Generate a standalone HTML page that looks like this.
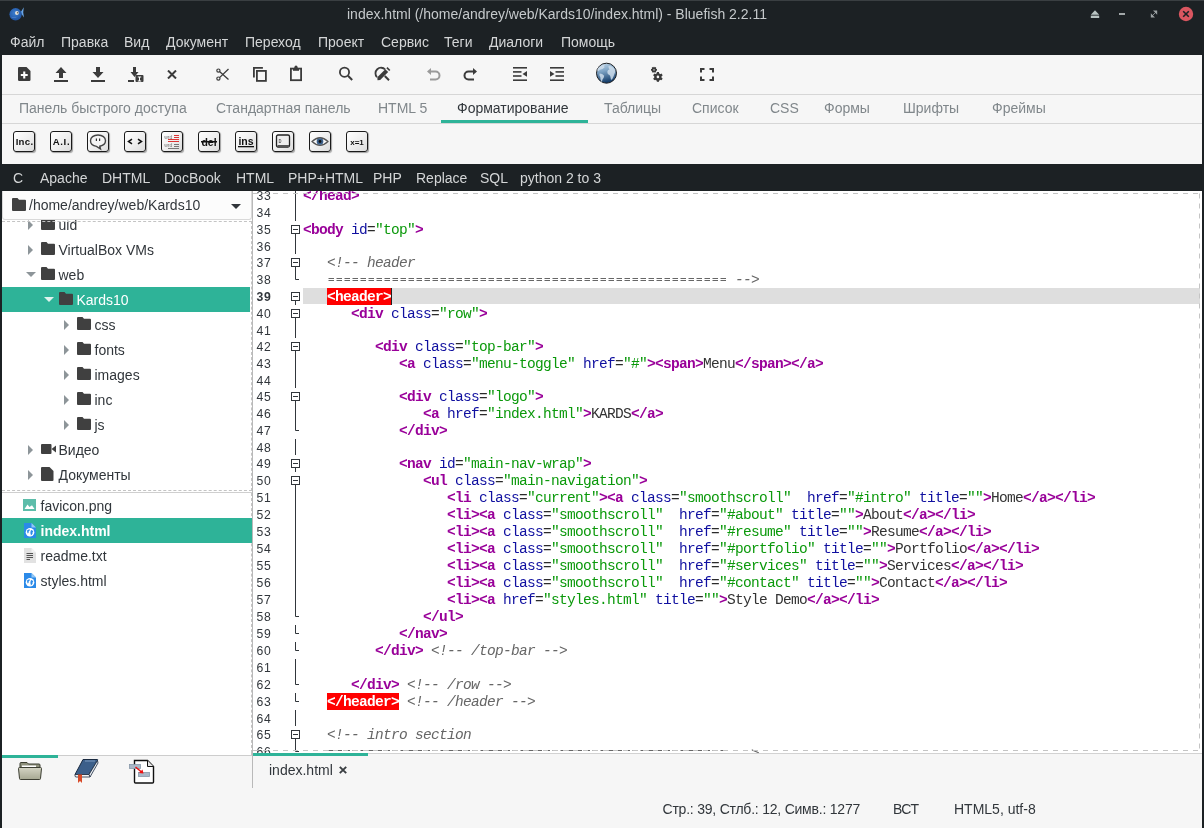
<!DOCTYPE html>
<html><head><meta charset="utf-8">
<style>
*{margin:0;padding:0;box-sizing:border-box}
html,body{width:1204px;height:828px;overflow:hidden;background:#1c2124;font-family:"Liberation Sans",sans-serif;font-size:14px}
body>*{will-change:transform}
.a{position:absolute;white-space:pre;line-height:16px}
#title{left:0;top:0;width:1204px;height:1px;background:#3a3f42;position:absolute}
.mi{color:#d4d6d7}
#tb{position:absolute;left:2px;top:55px;width:1200px;height:109px;background:#f6f6f6}
#tabs{position:absolute;left:0;top:39px;width:1200px;height:30px;border-top:1px solid #d6d6d6;border-bottom:1px solid #d6d6d6}
.tab{color:#80878b}
#darkbar{position:absolute;left:0;top:164px;width:1204px;height:27px;background:#1c2124}
.db{color:#d4d6d7}
#left{position:absolute;left:2px;top:191px;width:250px;height:564px;background:#fff;overflow:hidden}
#editor{position:absolute;left:253px;top:191px;width:949px;height:562px;background:#fff;overflow:hidden}
#bottom{position:absolute;left:2px;top:753px;width:1200px;height:75px;background:#f6f6f6}
.ic{position:absolute}
.fb{position:absolute;top:131px;width:22px;height:21px;border:1px solid #1a1a1a;border-radius:3px;background:linear-gradient(135deg,#fff 0%,#f0f0f0 50%,#dcdcdc 100%);box-shadow:1px 1px 1px rgba(0,0,0,.35)}
.fb svg{position:absolute;left:-1px;top:-1px}
.cl{position:absolute;left:50px;font-family:"Liberation Mono",monospace;font-size:14.5px;letter-spacing:-0.7015px;white-space:pre;line-height:16px;color:#333}
.ln{position:absolute;left:3.4px;font-size:12.2px;letter-spacing:.8px;line-height:16px;color:#31363b;white-space:pre}
.t{color:#990099;font-weight:bold}.n{color:#1010a0}.e{color:#2a2a2a}.s{color:#0b990b}.x{color:#333}.c{color:#666;font-style:italic}.r{color:#fff;font-weight:bold}
.code{position:absolute;font-family:"Liberation Mono",monospace;font-size:13.33px;white-space:pre;line-height:16.8px}
</style></head><body>
<div id="title"></div>
<div class="a" style="left:347px;top:6px;color:#c5c9cb">index.html (/home/andrey/web/Kards10/index.html) - Bluefish 2.2.11</div>
<svg class="ic" style="left:1090px;top:10px" width="10" height="9" viewBox="0 0 10 9"><path d="M5 0.3L9.2 4.8H0.8Z" fill="#b9c4c3"/><rect x="0.8" y="5.6" width="8.4" height="2.4" fill="#b9c4c3"/></svg>
<div style="position:absolute;left:1119px;top:13px;width:6px;height:2px;background:#a2a8a9"></div>
<svg class="ic" style="left:1150px;top:10px" width="8" height="8" viewBox="0 0 8 8"><path d="M3 0.5H7.2V4.7Z" fill="#9ca2a3"/><path d="M0.8 3.3V7.5H5Z" fill="#9ca2a3"/><path d="M1 7L7 1" stroke="#9ca2a3" stroke-width="0.8"/></svg>
<svg class="ic" style="left:1178px;top:6px" width="16" height="16" viewBox="0 0 16 16"><circle cx="8" cy="8" r="7.2" fill="#da5660"/><path d="M5.2 5.2L10.8 10.8M10.8 5.2L5.2 10.8" stroke="#1c2124" stroke-width="1.6"/></svg>
<svg class="ic" style="left:0;top:0" width="28" height="24" viewBox="0 0 28 24"><defs><radialGradient id="fish" cx="0.45" cy="0.4" r="0.65"><stop offset="0" stop-color="#3d7fd0"/><stop offset="1" stop-color="#1d4f9c"/></radialGradient></defs><path d="M20.5 12.5L23.8 7.3L23.2 12.5L24 17.6Z" fill="#6aa6e6"/><circle cx="15.6" cy="14.3" r="6.2" fill="url(#fish)"/><path d="M10.5 16.5Q14 18.5 17 16.8Q14 19.5 10.5 16.5Z" fill="#5a90d8"/><circle cx="16.9" cy="13" r="1.9" fill="#e4e2dc"/><circle cx="17.6" cy="12.8" r="0.8" fill="#6a6050"/></svg>
<div class="a mi" style="left:10px;top:34px">Файл</div>
<div class="a mi" style="left:61px;top:34px">Правка</div>
<div class="a mi" style="left:124px;top:34px">Вид</div>
<div class="a mi" style="left:166px;top:34px">Документ</div>
<div class="a mi" style="left:245px;top:34px">Переход</div>
<div class="a mi" style="left:318px;top:34px">Проект</div>
<div class="a mi" style="left:381px;top:34px">Сервис</div>
<div class="a mi" style="left:444px;top:34px">Теги</div>
<div class="a mi" style="left:489px;top:34px">Диалоги</div>
<div class="a mi" style="left:561px;top:34px">Помощь</div>

<div id="tb">
 <div id="tabs"></div>
</div>


<svg class="ic" style="left:18px;top:67px" width="13" height="14" viewBox="0 0 13 14"><path d="M0 1.2Q0 0 1.2 0H8.5L12.5 4V12.8Q12.5 14 11.3 14H1.2Q0 14 0 12.8Z" fill="#3b3b3b"/><path d="M5.2 4.5h2.1v2.4h2.4v2.1H7.3v2.4H5.2V9H2.8V6.9h2.4z" fill="#fff"/></svg>
<svg class="ic" style="left:54px;top:67px" width="14" height="15" viewBox="0 0 14 15"><path d="M7 0L12.5 6H9V11H5V6H1.5Z" fill="#3b3b3b"/><rect x="0" y="13" width="14" height="2" fill="#3b3b3b"/></svg>
<svg class="ic" style="left:91px;top:67px" width="14" height="15" viewBox="0 0 14 15"><path d="M5 0H9V5H12.5L7 11L1.5 5H5Z" fill="#3b3b3b"/><rect x="0" y="13" width="14" height="2" fill="#3b3b3b"/></svg>
<svg class="ic" style="left:128px;top:67px" width="16" height="15" viewBox="0 0 16 15"><path d="M5 0H8V5H10.5L6.5 10L2.5 5H5Z" fill="#3b3b3b"/><rect x="0" y="13" width="6" height="2" fill="#3b3b3b"/><rect x="7.5" y="8" width="8" height="7" rx="1" fill="#3b3b3b"/><path d="M9.8 9.6h3.4v1h-1.2v2.8h1.2v1H9.8v-1h1.2v-2.8H9.8z" fill="#fff"/></svg>
<svg class="ic" style="left:167px;top:70px" width="10" height="9" viewBox="0 0 10 9"><path d="M1 0.5L9 8.5M9 0.5L1 8.5" stroke="#3b3b3b" stroke-width="2"/></svg>
<svg class="ic" style="left:205px;top:60px" width="105" height="28" viewBox="0 0 105 28"><g fill="none" stroke="#3b3b3b"><circle cx="13.4" cy="10.6" r="1.6" stroke-width="1.2"/><circle cx="13.4" cy="18.6" r="1.6" stroke-width="1.2"/><path d="M14.8 11.8L23.5 19.5M14.8 17.4L23.5 9" stroke-width="1.3"/><path d="M48.9 17.4V7.9H57.9" stroke-width="1.8"/><rect x="51.9" y="10.9" width="9" height="10" stroke-width="1.8"/><rect x="85.9" y="8.6" width="10.2" height="11.6" stroke-width="1.8"/></g><path d="M88 8H94V10.8H88Z" fill="#3b3b3b"/><circle cx="91" cy="7.2" r="1.6" fill="#3b3b3b"/></svg>
<svg class="ic" style="left:330px;top:60px" width="70" height="28" viewBox="0 0 70 28"><g fill="none" stroke="#3b3b3b"><circle cx="14.5" cy="12.2" r="4.6" stroke-width="1.8"/><path d="M18 15.8L22.2 20" stroke-width="2"/><path d="M47 17.2A4.6 4.6 0 1 1 55.2 9.5" stroke-width="1.8"/><path d="M54.8 16L59 20.2" stroke-width="2"/></g><path d="M47.5 20.2L47.3 17.2L55.3 9.2L58.2 12.1L50.2 20.1Z" fill="#3b3b3b"/><path d="M56.3 8.2L57.5 7L60.4 9.9L59.2 11.1Z" fill="#3b3b3b"/></svg>
<svg class="ic" style="left:427px;top:67px" width="14" height="14" viewBox="0 0 14 14"><path d="M2 4.5H8.5A4 4 0 0 1 8.5 12.5H3" fill="none" stroke="#9a9a9a" stroke-width="2"/><path d="M0 4.5L4 1V8Z" fill="#9a9a9a"/></svg>
<svg class="ic" style="left:463px;top:67px" width="14" height="14" viewBox="0 0 14 14"><path d="M12 4.5H5.5A4 4 0 0 0 5.5 12.5H11" fill="none" stroke="#3b3b3b" stroke-width="2"/><path d="M14 4.5L10 1V8Z" fill="#3b3b3b"/></svg>
<svg class="ic" style="left:513px;top:67px" width="14" height="14" viewBox="0 0 14 14"><rect x="0" y="0" width="14" height="1.6" fill="#3b3b3b"/><rect x="0" y="4.1" width="8.5" height="1.6" fill="#3b3b3b"/><rect x="0" y="8.2" width="8.5" height="1.6" fill="#3b3b3b"/><rect x="0" y="12.4" width="14" height="1.6" fill="#3b3b3b"/><path d="M9.5 6.9L14 4V9.8Z" fill="#3b3b3b"/></svg>
<svg class="ic" style="left:550px;top:67px" width="14" height="14" viewBox="0 0 14 14"><rect x="0" y="0" width="14" height="1.6" fill="#3b3b3b"/><rect x="5.5" y="4.1" width="8.5" height="1.6" fill="#3b3b3b"/><rect x="5.5" y="8.2" width="8.5" height="1.6" fill="#3b3b3b"/><rect x="0" y="12.4" width="14" height="1.6" fill="#3b3b3b"/><path d="M4.5 6.9L0 4V9.8Z" fill="#3b3b3b"/></svg>
<svg class="ic" style="left:592px;top:60px" width="30" height="28" viewBox="0 0 30 28"><defs><linearGradient id="gl" x1="0" y1="0" x2="0.2" y2="1"><stop offset="0" stop-color="#c2d8ea"/><stop offset="0.45" stop-color="#7ea3c4"/><stop offset="1" stop-color="#173f6c"/></linearGradient></defs><circle cx="14.5" cy="13.2" r="10" fill="url(#gl)" stroke="#1b1d20" stroke-width="1"/><g fill="#cfdeec" opacity="0.85"><path d="M6 8Q8.5 5 13 4.2Q11.5 6 12.5 7.5Q10.5 9.5 8 9.8Q6.5 11 5.6 11.6Q5.2 10 6 8Z"/><path d="M7.5 13.5Q10 13.2 12.2 15.8Q12 17.8 10.5 19.5Q10.2 21.5 9.3 22Q8.2 19 8.3 17Q7 15.5 7.5 13.5Z"/><path d="M16.5 6Q19.5 5.6 22 8.2Q23.8 10.5 23.2 12Q22.3 14 21.5 16.5Q20.5 19.5 19 20Q18.6 17.5 18.2 16Q17.5 14.5 16.5 14.5Q15 13.5 15.4 11.3Q16 9.8 17.5 9.6Q16.4 8 16.5 6Z"/></g></svg>
<svg class="ic" style="left:646px;top:62px" width="24" height="24" viewBox="0 0 24 24"><g fill="#3b3b3b"><circle cx="8" cy="7.8" r="2.4"/><rect x="7.1" y="4.8" width="1.8" height="6" transform="rotate(30 8 7.8)"/><rect x="7.1" y="4.8" width="1.8" height="6" transform="rotate(90 8 7.8)"/><rect x="7.1" y="4.8" width="1.8" height="6" transform="rotate(150 8 7.8)"/><circle cx="11.9" cy="14.9" r="3.7"/><rect x="10.8" y="10" width="2.2" height="9.8"/><rect x="10.8" y="10" width="2.2" height="9.8" transform="rotate(60 11.9 14.9)"/><rect x="10.8" y="10" width="2.2" height="9.8" transform="rotate(120 11.9 14.9)"/></g><circle cx="8" cy="7.8" r="0.9" fill="#aaa"/><circle cx="11.9" cy="14.9" r="1.3" fill="#f6f6f6"/></svg>
<svg class="ic" style="left:700px;top:68px" width="14" height="13" viewBox="0 0 14 13"><path d="M1 4.5V1H4.5M9.5 1H13V4.5M13 8.5V12H9.5M4.5 12H1V8.5" fill="none" stroke="#3b3b3b" stroke-width="2"/></svg>


<div class="a tab" style="left:19px;top:100px">Панель быстрого доступа</div>
<div class="a tab" style="left:216px;top:100px">Стандартная панель</div>
<div class="a tab" style="left:378px;top:100px">HTML 5</div>
<div class="a" style="left:457px;top:100px;color:#31363b">Форматирование</div>
<div class="a tab" style="left:604px;top:100px">Таблицы</div>
<div class="a tab" style="left:692px;top:100px">Список</div>
<div class="a tab" style="left:770px;top:100px">CSS</div>
<div class="a tab" style="left:824px;top:100px">Формы</div>
<div class="a tab" style="left:903px;top:100px">Шрифты</div>
<div class="a tab" style="left:992px;top:100px">Фреймы</div>
<div style="position:absolute;left:441px;top:120px;width:147px;height:3px;background:#2eb398"></div>
<div class="fb" style="left:13px"><svg width="22" height="21" viewBox="0 0 22 21"><text x="11.5" y="14.3" text-anchor="middle" font-family="Liberation Sans" font-weight="bold" font-size="9.6" letter-spacing="0.3" fill="#111">Inc.</text></svg></div>
<div class="fb" style="left:50px"><svg width="22" height="21" viewBox="0 0 22 21"><text x="11.5" y="14.3" text-anchor="middle" font-family="Liberation Sans" font-weight="bold" font-size="9.6" letter-spacing="0.6" fill="#111">A.I.</text></svg></div>
<div class="fb" style="left:87px"><svg width="22" height="21" viewBox="0 0 22 21"><path d="M11 4C6.5 4 3.5 6.5 3.5 9.8C3.5 12.8 6 15 9.5 15.4L13.5 18L12.8 15.2C16 14.5 18.5 12.5 18.5 9.8C18.5 6.5 15.5 4 11 4Z" fill="#f4f4f4" stroke="#444" stroke-width="1.4"/><rect x="8.8" y="7.5" width="1.2" height="2.5" fill="#333"/><rect x="12" y="7.5" width="1.2" height="2.5" fill="#333"/></svg></div>
<div class="fb" style="left:124px"><svg width="22" height="21" viewBox="0 0 22 21"><path d="M8 8.2L4.5 10.5L8 12.8M14 8.2L17.5 10.5L14 12.8" fill="none" stroke="#111" stroke-width="1.5"/></svg></div>
<div class="fb" style="left:161px"><svg width="22" height="21" viewBox="0 0 22 21"><text x="3.2" y="7.6" font-family="Liberation Sans" font-size="5" fill="#777">wrd</text><rect x="13" y="4" width="5" height="1" fill="#d33"/><rect x="13" y="6" width="5" height="1" fill="#d33"/><rect x="7" y="8" width="11" height="1" fill="#d33"/><rect x="7" y="10" width="11" height="1" fill="#d33"/><text x="3.2" y="16" font-family="Liberation Sans" font-size="5" fill="#777">wrd</text><rect x="13" y="13" width="5" height="1" fill="#777"/><rect x="13" y="15" width="5" height="1" fill="#777"/><rect x="7" y="17" width="11" height="1" fill="#777"/></svg></div>
<div class="fb" style="left:198px"><svg width="22" height="21" viewBox="0 0 22 21"><text x="11" y="14.5" text-anchor="middle" font-family="Liberation Sans" font-weight="bold" font-size="10.5" fill="#111">del</text><rect x="3" y="10" width="16" height="1.5" fill="#111"/></svg></div>
<div class="fb" style="left:235px"><svg width="22" height="21" viewBox="0 0 22 21"><text x="11" y="13.5" text-anchor="middle" font-family="Liberation Sans" font-weight="bold" font-size="10.5" fill="#111">ins</text><rect x="3" y="15" width="16" height="1.3" fill="#111"/></svg></div>
<div class="fb" style="left:272px"><svg width="22" height="21" viewBox="0 0 22 21"><rect x="4.5" y="4" width="13" height="12" rx="1.5" fill="#eee" stroke="#222" stroke-width="1.3"/><rect x="5.5" y="14" width="11.5" height="2" fill="#555"/><text x="6.5" y="12" font-family="Liberation Mono" font-size="5" fill="#333">D</text></svg></div>
<div class="fb" style="left:309px"><svg width="22" height="21" viewBox="0 0 22 21"><path d="M3 10.5Q11 3 19 10.5Q11 18 3 10.5Z" fill="#f8f8f8" stroke="#555" stroke-width="1.2"/><circle cx="11" cy="10.5" r="3.3" fill="#3a5f8a"/><circle cx="11" cy="10.5" r="1.4" fill="#111"/></svg></div>
<div class="fb" style="left:346px"><svg width="22" height="21" viewBox="0 0 22 21"><text x="11" y="13.5" text-anchor="middle" font-family="Liberation Sans" font-weight="bold" font-size="8" fill="#111">x=1</text></svg></div>

<div id="darkbar"></div>
<div class="a db" style="left:13px;top:170px">C</div>
<div class="a db" style="left:40px;top:170px">Apache</div>
<div class="a db" style="left:102px;top:170px">DHTML</div>
<div class="a db" style="left:164px;top:170px">DocBook</div>
<div class="a db" style="left:236px;top:170px">HTML</div>
<div class="a db" style="left:288px;top:170px">PHP+HTML</div>
<div class="a db" style="left:373px;top:170px">PHP</div>
<div class="a db" style="left:416px;top:170px">Replace</div>
<div class="a db" style="left:480px;top:170px">SQL</div>
<div class="a db" style="left:520px;top:170px">python 2 to 3</div>


<div id="left">
<div id="treewrap" style="position:absolute;left:0;top:0;width:250px;height:300px;overflow:hidden">
<div style="position:absolute;left:-2px;top:-191px;width:252px;height:828px">
<svg class="ic" style="left:28px;top:220px" width="5" height="10" viewBox="0 0 5 10"><path d="M0 0L5 5L0 10Z" fill="#8d9599"/></svg><svg class="ic" style="left:41px;top:217px" width="14" height="13" viewBox="0 0 14 13"><path d="M0 1Q0 0 1 0H5.5L7 1.8H13Q14 1.8 14 2.8V12Q14 13 13 13H1Q0 13 0 12Z" fill="#404040"/></svg><div class="a" style="left:58.5px;top:216.75px;color:#31363b">uid</div>
<svg class="ic" style="left:28px;top:245px" width="5" height="10" viewBox="0 0 5 10"><path d="M0 0L5 5L0 10Z" fill="#8d9599"/></svg><svg class="ic" style="left:41px;top:242px" width="14" height="13" viewBox="0 0 14 13"><path d="M0 1Q0 0 1 0H5.5L7 1.8H13Q14 1.8 14 2.8V12Q14 13 13 13H1Q0 13 0 12Z" fill="#404040"/></svg><div class="a" style="left:58.5px;top:241.75px;color:#31363b">VirtualBox VMs</div>
<svg class="ic" style="left:25.5px;top:272px" width="10" height="5" viewBox="0 0 10 5"><path d="M0 0H10L5 5Z" fill="#8d9599"/></svg><svg class="ic" style="left:41px;top:267px" width="14" height="13" viewBox="0 0 14 13"><path d="M0 1Q0 0 1 0H5.5L7 1.8H13Q14 1.8 14 2.8V12Q14 13 13 13H1Q0 13 0 12Z" fill="#404040"/></svg><div class="a" style="left:58.5px;top:266.75px;color:#31363b">web</div>
<div style="position:absolute;left:0;top:287.0px;width:250px;height:24.5px;background:#2eb398"></div>
<svg class="ic" style="left:43.5px;top:297px" width="10" height="5" viewBox="0 0 10 5"><path d="M0 0H10L5 5Z" fill="#dff3ee"/></svg><svg class="ic" style="left:59px;top:292px" width="14" height="13" viewBox="0 0 14 13"><path d="M0 1Q0 0 1 0H5.5L7 1.8H13Q14 1.8 14 2.8V12Q14 13 13 13H1Q0 13 0 12Z" fill="#404040"/></svg><div class="a" style="left:76.5px;top:291.75px;color:#fff">Kards10</div>
<svg class="ic" style="left:64px;top:320px" width="5" height="10" viewBox="0 0 5 10"><path d="M0 0L5 5L0 10Z" fill="#8d9599"/></svg><svg class="ic" style="left:77px;top:317px" width="14" height="13" viewBox="0 0 14 13"><path d="M0 1Q0 0 1 0H5.5L7 1.8H13Q14 1.8 14 2.8V12Q14 13 13 13H1Q0 13 0 12Z" fill="#404040"/></svg><div class="a" style="left:94.5px;top:316.75px;color:#31363b">css</div>
<svg class="ic" style="left:64px;top:345px" width="5" height="10" viewBox="0 0 5 10"><path d="M0 0L5 5L0 10Z" fill="#8d9599"/></svg><svg class="ic" style="left:77px;top:342px" width="14" height="13" viewBox="0 0 14 13"><path d="M0 1Q0 0 1 0H5.5L7 1.8H13Q14 1.8 14 2.8V12Q14 13 13 13H1Q0 13 0 12Z" fill="#404040"/></svg><div class="a" style="left:94.5px;top:341.75px;color:#31363b">fonts</div>
<svg class="ic" style="left:64px;top:370px" width="5" height="10" viewBox="0 0 5 10"><path d="M0 0L5 5L0 10Z" fill="#8d9599"/></svg><svg class="ic" style="left:77px;top:367px" width="14" height="13" viewBox="0 0 14 13"><path d="M0 1Q0 0 1 0H5.5L7 1.8H13Q14 1.8 14 2.8V12Q14 13 13 13H1Q0 13 0 12Z" fill="#404040"/></svg><div class="a" style="left:94.5px;top:366.75px;color:#31363b">images</div>
<svg class="ic" style="left:64px;top:395px" width="5" height="10" viewBox="0 0 5 10"><path d="M0 0L5 5L0 10Z" fill="#8d9599"/></svg><svg class="ic" style="left:77px;top:392px" width="14" height="13" viewBox="0 0 14 13"><path d="M0 1Q0 0 1 0H5.5L7 1.8H13Q14 1.8 14 2.8V12Q14 13 13 13H1Q0 13 0 12Z" fill="#404040"/></svg><div class="a" style="left:94.5px;top:391.75px;color:#31363b">inc</div>
<svg class="ic" style="left:64px;top:420px" width="5" height="10" viewBox="0 0 5 10"><path d="M0 0L5 5L0 10Z" fill="#8d9599"/></svg><svg class="ic" style="left:77px;top:417px" width="14" height="13" viewBox="0 0 14 13"><path d="M0 1Q0 0 1 0H5.5L7 1.8H13Q14 1.8 14 2.8V12Q14 13 13 13H1Q0 13 0 12Z" fill="#404040"/></svg><div class="a" style="left:94.5px;top:416.75px;color:#31363b">js</div>
<svg class="ic" style="left:28px;top:445px" width="5" height="10" viewBox="0 0 5 10"><path d="M0 0L5 5L0 10Z" fill="#8d9599"/></svg><svg class="ic" style="left:41px;top:444px" width="15" height="10" viewBox="0 0 15 10"><rect x="0" y="0" width="10.5" height="10" rx="1" fill="#404040"/><path d="M10.5 5L15 1.5V8.5Z" fill="#404040"/></svg><div class="a" style="left:58.5px;top:441.75px;color:#31363b">Видео</div>
<svg class="ic" style="left:28px;top:470px" width="5" height="10" viewBox="0 0 5 10"><path d="M0 0L5 5L0 10Z" fill="#8d9599"/></svg><svg class="ic" style="left:41px;top:467px" width="13" height="14" viewBox="0 0 13 14"><path d="M0 1Q0 0 1 0H8.5L12.5 4V13Q12.5 14 11.5 14H1Q0 14 0 13Z" fill="#404040"/></svg><div class="a" style="left:58.5px;top:466.75px;color:#31363b">Документы</div>
<svg class="ic" style="left:28px;top:495px" width="5" height="10" viewBox="0 0 5 10"><path d="M0 0L5 5L0 10Z" fill="#8d9599"/></svg><svg class="ic" style="left:41px;top:492px" width="14" height="13" viewBox="0 0 14 13"><path d="M0 1Q0 0 1 0H5.5L7 1.8H13Q14 1.8 14 2.8V12Q14 13 13 13H1Q0 13 0 12Z" fill="#404040"/></svg><div class="a" style="left:58.5px;top:491.75px;color:#31363b">Загрузки</div>
</div>
</div>
<div style="position:absolute;left:0;top:0;width:250px;height:29px;background:#fcfcfc;border:1px solid #d9d9d9;border-top:none;border-radius:0 0 3px 3px"></div>
<svg class="ic" style="left:10px;top:7px" width="14" height="13" viewBox="0 0 14 13"><path d="M0 1Q0 0 1 0H5.5L7 1.8H13Q14 1.8 14 2.8V12Q14 13 13 13H1Q0 13 0 12Z" fill="#404040"/></svg>
<div class="a" style="left:27px;top:6px;color:#31363b">/home/andrey/web/Kards10</div>
<svg class="ic" style="left:228.5px;top:13px" width="10" height="5" viewBox="0 0 10 5"><path d="M0 0H10L5 5Z" fill="#31363b"/></svg>
<div style="position:absolute;left:0;top:30px;width:250px;height:0;border-top:1px dashed #c4c4c4"></div>
<div style="position:absolute;left:248.5px;top:30px;width:0;height:270px;border-left:1px dashed #c4c4c4"></div>
<div style="position:absolute;left:0;top:299px;width:250px;height:0;border-top:1px dashed #c4c4c4"></div>
<div style="position:absolute;left:0;top:301px;width:250px;height:1px;background:#cfcfcf"></div>
<div style="position:absolute;left:248.5px;top:302px;width:0;height:260px;border-left:1px dashed #c4c4c4"></div>

<div style="position:absolute;left:0;top:327px;width:250px;height:24.5px;background:#2eb398"></div>
<svg class="ic" style="left:21px;top:308px" width="13" height="12" viewBox="0 0 13 12"><rect x="0" y="0" width="13" height="12" fill="#5dbdaa"/><path d="M1.5 10L4.5 5.5L6.5 8L9 6.3L11.5 10Z" fill="#fff"/></svg>
<div class="a" style="left:38.5px;top:307.15px;color:#31363b">favicon.png</div>
<svg class="ic" style="left:22px;top:332px" width="12" height="15" viewBox="0 0 12 15"><path d="M0 0H7.5L12 4.5V15H0Z" fill="#2b8ae8"/><path d="M7.5 0L12 4.5H7.5Z" fill="#94c8f6"/><circle cx="6" cy="9.3" r="4.3" fill="#fff"/><path d="M3.2 7.2Q4.5 6 6 6.6Q5.6 8.2 4.6 8.6Q5 10.2 3.8 10.6Q2.8 9 3.2 7.2Z" fill="#2b8ae8"/><path d="M7 7Q8.8 7.2 9.3 8.8Q8.2 9 8.6 10.6Q7.8 12.2 6.8 12.6Q7 11 6.4 10.2Q6.3 8.8 7 7Z" fill="#2b8ae8"/></svg>
<div class="a" style="left:38.5px;top:332.15px;color:#fff;font-weight:bold">index.html</div>
<svg class="ic" style="left:22px;top:357px" width="12" height="15" viewBox="0 0 12 15"><path d="M0 0H7.5L12 4.5V15H0Z" fill="#e2e2e2"/><path d="M7.5 0L12 4.5H7.5Z" fill="#f4f4f4"/><g fill="#555"><rect x="2.5" y="5" width="6.5" height="1"/><rect x="2.5" y="7" width="6.5" height="1"/><rect x="2.5" y="9" width="6.5" height="1"/><rect x="2.5" y="11" width="3.5" height="1"/></g></svg>
<div class="a" style="left:38.5px;top:357.15px;color:#31363b">readme.txt</div>
<svg class="ic" style="left:22px;top:382px" width="12" height="15" viewBox="0 0 12 15"><path d="M0 0H7.5L12 4.5V15H0Z" fill="#2b8ae8"/><path d="M7.5 0L12 4.5H7.5Z" fill="#94c8f6"/><circle cx="6" cy="9.3" r="4.3" fill="#fff"/><path d="M3.2 7.2Q4.5 6 6 6.6Q5.6 8.2 4.6 8.6Q5 10.2 3.8 10.6Q2.8 9 3.2 7.2Z" fill="#2b8ae8"/><path d="M7 7Q8.8 7.2 9.3 8.8Q8.2 9 8.6 10.6Q7.8 12.2 6.8 12.6Q7 11 6.4 10.2Q6.3 8.8 7 7Z" fill="#2b8ae8"/></svg>
<div class="a" style="left:38.5px;top:382.15px;color:#31363b">styles.html</div>
</div>
<div id="editor"><div style="position:absolute;left:49.5px;top:97px;width:897px;height:16px;background:#dedede"></div>
<div class="cl" style="top:-2.86px"><span class="t">&lt;/head&gt;</span></div>
<div class="ln" style="top:-3.23px;font-weight:normal">33</div>
<div class="cl" style="top:14.14px"></div>
<div class="ln" style="top:13.77px;font-weight:normal">34</div>
<div class="cl" style="top:31.14px"><span class="t">&lt;body</span><span class="x"> </span><span class="n">id</span><span class="e">=</span><span class="s">"top"</span><span class="t">&gt;</span></div>
<div class="ln" style="top:30.77px;font-weight:normal">35</div>
<div class="cl" style="top:48.14px"></div>
<div class="ln" style="top:47.77px;font-weight:normal">36</div>
<div class="cl" style="top:64.14px"><span class="x">   </span><span class="c">&lt;!-- header</span></div>
<div class="ln" style="top:63.77px;font-weight:normal">37</div>
<div class="cl" style="top:81.14px"><span class="x">                                                     </span><span class="c"> --&gt;</span></div>
<div class="ln" style="top:80.77px;font-weight:normal">38</div>
<div style="position:absolute;left:74px;top:97px;width:64px;height:17px;background:#ff0000"></div>
<div class="cl" style="top:98.14px"><span class="x">   </span><span class="r">&lt;header&gt;</span></div>
<div class="ln" style="top:97.77px;font-weight:bold">39</div>
<div class="cl" style="top:115.14px"><span class="x">      </span><span class="t">&lt;div</span><span class="x"> </span><span class="n">class</span><span class="e">=</span><span class="s">"row"</span><span class="t">&gt;</span></div>
<div class="ln" style="top:114.77px;font-weight:normal">40</div>
<div class="cl" style="top:132.14px"></div>
<div class="ln" style="top:131.77px;font-weight:normal">41</div>
<div class="cl" style="top:148.14px"><span class="x">         </span><span class="t">&lt;div</span><span class="x"> </span><span class="n">class</span><span class="e">=</span><span class="s">"top-bar"</span><span class="t">&gt;</span></div>
<div class="ln" style="top:147.77px;font-weight:normal">42</div>
<div class="cl" style="top:165.14px"><span class="x">            </span><span class="t">&lt;a</span><span class="x"> </span><span class="n">class</span><span class="e">=</span><span class="s">"menu-toggle"</span><span class="x"> </span><span class="n">href</span><span class="e">=</span><span class="s">"#"</span><span class="t">&gt;</span><span class="t">&lt;span&gt;</span><span class="x">Menu</span><span class="t">&lt;/span&gt;</span><span class="t">&lt;/a&gt;</span></div>
<div class="ln" style="top:164.77px;font-weight:normal">43</div>
<div class="cl" style="top:182.14px"></div>
<div class="ln" style="top:181.77px;font-weight:normal">44</div>
<div class="cl" style="top:198.14px"><span class="x">            </span><span class="t">&lt;div</span><span class="x"> </span><span class="n">class</span><span class="e">=</span><span class="s">"logo"</span><span class="t">&gt;</span></div>
<div class="ln" style="top:197.77px;font-weight:normal">45</div>
<div class="cl" style="top:215.14px"><span class="x">               </span><span class="t">&lt;a</span><span class="x"> </span><span class="n">href</span><span class="e">=</span><span class="s">"index.html"</span><span class="t">&gt;</span><span class="x">KARDS</span><span class="t">&lt;/a&gt;</span></div>
<div class="ln" style="top:214.77px;font-weight:normal">46</div>
<div class="cl" style="top:232.14px"><span class="x">            </span><span class="t">&lt;/div&gt;</span></div>
<div class="ln" style="top:231.77px;font-weight:normal">47</div>
<div class="cl" style="top:249.14px"></div>
<div class="ln" style="top:248.77px;font-weight:normal">48</div>
<div class="cl" style="top:265.14px"><span class="x">            </span><span class="t">&lt;nav</span><span class="x"> </span><span class="n">id</span><span class="e">=</span><span class="s">"main-nav-wrap"</span><span class="t">&gt;</span></div>
<div class="ln" style="top:264.77px;font-weight:normal">49</div>
<div class="cl" style="top:282.14px"><span class="x">               </span><span class="t">&lt;ul</span><span class="x"> </span><span class="n">class</span><span class="e">=</span><span class="s">"main-navigation"</span><span class="t">&gt;</span></div>
<div class="ln" style="top:281.77px;font-weight:normal">50</div>
<div class="cl" style="top:299.14px"><span class="x">                  </span><span class="t">&lt;li</span><span class="x"> </span><span class="n">class</span><span class="e">=</span><span class="s">"current"</span><span class="t">&gt;</span><span class="t">&lt;a</span><span class="x"> </span><span class="n">class</span><span class="e">=</span><span class="s">"smoothscroll"</span><span class="x">  </span><span class="n">href</span><span class="e">=</span><span class="s">"#intro"</span><span class="x"> </span><span class="n">title</span><span class="e">=</span><span class="s">""</span><span class="t">&gt;</span><span class="x">Home</span><span class="t">&lt;/a&gt;</span><span class="t">&lt;/li&gt;</span></div>
<div class="ln" style="top:298.77px;font-weight:normal">51</div>
<div class="cl" style="top:316.14px"><span class="x">                  </span><span class="t">&lt;li&gt;</span><span class="t">&lt;a</span><span class="x"> </span><span class="n">class</span><span class="e">=</span><span class="s">"smoothscroll"</span><span class="x">  </span><span class="n">href</span><span class="e">=</span><span class="s">"#about"</span><span class="x"> </span><span class="n">title</span><span class="e">=</span><span class="s">""</span><span class="t">&gt;</span><span class="x">About</span><span class="t">&lt;/a&gt;</span><span class="t">&lt;/li&gt;</span></div>
<div class="ln" style="top:315.77px;font-weight:normal">52</div>
<div class="cl" style="top:333.14px"><span class="x">                  </span><span class="t">&lt;li&gt;</span><span class="t">&lt;a</span><span class="x"> </span><span class="n">class</span><span class="e">=</span><span class="s">"smoothscroll"</span><span class="x">  </span><span class="n">href</span><span class="e">=</span><span class="s">"#resume"</span><span class="x"> </span><span class="n">title</span><span class="e">=</span><span class="s">""</span><span class="t">&gt;</span><span class="x">Resume</span><span class="t">&lt;/a&gt;</span><span class="t">&lt;/li&gt;</span></div>
<div class="ln" style="top:332.77px;font-weight:normal">53</div>
<div class="cl" style="top:350.14px"><span class="x">                  </span><span class="t">&lt;li&gt;</span><span class="t">&lt;a</span><span class="x"> </span><span class="n">class</span><span class="e">=</span><span class="s">"smoothscroll"</span><span class="x">  </span><span class="n">href</span><span class="e">=</span><span class="s">"#portfolio"</span><span class="x"> </span><span class="n">title</span><span class="e">=</span><span class="s">""</span><span class="t">&gt;</span><span class="x">Portfolio</span><span class="t">&lt;/a&gt;</span><span class="t">&lt;/li&gt;</span></div>
<div class="ln" style="top:349.77px;font-weight:normal">54</div>
<div class="cl" style="top:367.14px"><span class="x">                  </span><span class="t">&lt;li&gt;</span><span class="t">&lt;a</span><span class="x"> </span><span class="n">class</span><span class="e">=</span><span class="s">"smoothscroll"</span><span class="x">  </span><span class="n">href</span><span class="e">=</span><span class="s">"#services"</span><span class="x"> </span><span class="n">title</span><span class="e">=</span><span class="s">""</span><span class="t">&gt;</span><span class="x">Services</span><span class="t">&lt;/a&gt;</span><span class="t">&lt;/li&gt;</span></div>
<div class="ln" style="top:366.77px;font-weight:normal">55</div>
<div class="cl" style="top:384.14px"><span class="x">                  </span><span class="t">&lt;li&gt;</span><span class="t">&lt;a</span><span class="x"> </span><span class="n">class</span><span class="e">=</span><span class="s">"smoothscroll"</span><span class="x">  </span><span class="n">href</span><span class="e">=</span><span class="s">"#contact"</span><span class="x"> </span><span class="n">title</span><span class="e">=</span><span class="s">""</span><span class="t">&gt;</span><span class="x">Contact</span><span class="t">&lt;/a&gt;</span><span class="t">&lt;/li&gt;</span></div>
<div class="ln" style="top:383.77px;font-weight:normal">56</div>
<div class="cl" style="top:401.14px"><span class="x">                  </span><span class="t">&lt;li&gt;</span><span class="t">&lt;a</span><span class="x"> </span><span class="n">href</span><span class="e">=</span><span class="s">"styles.html"</span><span class="x"> </span><span class="n">title</span><span class="e">=</span><span class="s">""</span><span class="t">&gt;</span><span class="x">Style Demo</span><span class="t">&lt;/a&gt;</span><span class="t">&lt;/li&gt;</span></div>
<div class="ln" style="top:400.77px;font-weight:normal">57</div>
<div class="cl" style="top:418.14px"><span class="x">               </span><span class="t">&lt;/ul&gt;</span></div>
<div class="ln" style="top:417.77px;font-weight:normal">58</div>
<div class="cl" style="top:435.14px"><span class="x">            </span><span class="t">&lt;/nav&gt;</span></div>
<div class="ln" style="top:434.77px;font-weight:normal">59</div>
<div class="cl" style="top:452.14px"><span class="x">         </span><span class="t">&lt;/div&gt;</span><span class="x"> </span><span class="c">&lt;!-- /top-bar --&gt;</span></div>
<div class="ln" style="top:451.77px;font-weight:normal">60</div>
<div class="cl" style="top:469.14px"></div>
<div class="ln" style="top:468.77px;font-weight:normal">61</div>
<div class="cl" style="top:486.14px"><span class="x">      </span><span class="t">&lt;/div&gt;</span><span class="x"> </span><span class="c">&lt;!-- /row --&gt;</span></div>
<div class="ln" style="top:485.77px;font-weight:normal">62</div>
<div style="position:absolute;left:74px;top:502px;width:72px;height:17px;background:#ff0000"></div>
<div class="cl" style="top:503.14px"><span class="x">   </span><span class="r">&lt;/header&gt;</span><span class="x"> </span><span class="c">&lt;!-- /header --&gt;</span></div>
<div class="ln" style="top:502.77px;font-weight:normal">63</div>
<div class="cl" style="top:520.14px"></div>
<div class="ln" style="top:519.77px;font-weight:normal">64</div>
<div class="cl" style="top:536.14px"><span class="x">   </span><span class="c">&lt;!-- intro section</span></div>
<div class="ln" style="top:535.77px;font-weight:normal">65</div>
<div class="cl" style="top:555.14px"><span class="x">                                                     </span><span class="c"> --&gt;</span></div>
<div class="ln" style="top:552.77px;font-weight:normal">66</div>
<svg style="position:absolute;left:0;top:0" width="949" height="562"><g fill="#666"><rect x="75.5" y="559" width="5.5" height="1"/><rect x="83.5" y="559" width="5.5" height="1"/><rect x="91.5" y="559" width="5.5" height="1"/><rect x="99.5" y="559" width="5.5" height="1"/><rect x="107.5" y="559" width="5.5" height="1"/><rect x="115.5" y="559" width="5.5" height="1"/><rect x="123.5" y="559" width="5.5" height="1"/><rect x="131.5" y="559" width="5.5" height="1"/><rect x="139.5" y="559" width="5.5" height="1"/><rect x="147.5" y="559" width="5.5" height="1"/><rect x="155.5" y="559" width="5.5" height="1"/><rect x="163.5" y="559" width="5.5" height="1"/><rect x="171.5" y="559" width="5.5" height="1"/><rect x="179.5" y="559" width="5.5" height="1"/><rect x="187.5" y="559" width="5.5" height="1"/><rect x="195.5" y="559" width="5.5" height="1"/><rect x="203.5" y="559" width="5.5" height="1"/><rect x="211.5" y="559" width="5.5" height="1"/><rect x="219.5" y="559" width="5.5" height="1"/><rect x="227.5" y="559" width="5.5" height="1"/><rect x="235.5" y="559" width="5.5" height="1"/><rect x="243.5" y="559" width="5.5" height="1"/><rect x="251.5" y="559" width="5.5" height="1"/><rect x="259.5" y="559" width="5.5" height="1"/><rect x="267.5" y="559" width="5.5" height="1"/><rect x="275.5" y="559" width="5.5" height="1"/><rect x="283.5" y="559" width="5.5" height="1"/><rect x="291.5" y="559" width="5.5" height="1"/><rect x="299.5" y="559" width="5.5" height="1"/><rect x="307.5" y="559" width="5.5" height="1"/><rect x="315.5" y="559" width="5.5" height="1"/><rect x="323.5" y="559" width="5.5" height="1"/><rect x="331.5" y="559" width="5.5" height="1"/><rect x="339.5" y="559" width="5.5" height="1"/><rect x="347.5" y="559" width="5.5" height="1"/><rect x="355.5" y="559" width="5.5" height="1"/><rect x="363.5" y="559" width="5.5" height="1"/><rect x="371.5" y="559" width="5.5" height="1"/><rect x="379.5" y="559" width="5.5" height="1"/><rect x="387.5" y="559" width="5.5" height="1"/><rect x="395.5" y="559" width="5.5" height="1"/><rect x="403.5" y="559" width="5.5" height="1"/><rect x="411.5" y="559" width="5.5" height="1"/><rect x="419.5" y="559" width="5.5" height="1"/><rect x="427.5" y="559" width="5.5" height="1"/><rect x="435.5" y="559" width="5.5" height="1"/><rect x="443.5" y="559" width="5.5" height="1"/><rect x="451.5" y="559" width="5.5" height="1"/><rect x="459.5" y="559" width="5.5" height="1"/><rect x="467.5" y="559" width="5.5" height="1"/></g></svg>
<svg style="position:absolute;left:0;top:0" width="949" height="562"><g fill="#666"><rect x="75.5" y="87" width="5.5" height="1"/><rect x="75.5" y="89" width="5.5" height="1"/><rect x="83.5" y="87" width="5.5" height="1"/><rect x="83.5" y="89" width="5.5" height="1"/><rect x="91.5" y="87" width="5.5" height="1"/><rect x="91.5" y="89" width="5.5" height="1"/><rect x="99.5" y="87" width="5.5" height="1"/><rect x="99.5" y="89" width="5.5" height="1"/><rect x="107.5" y="87" width="5.5" height="1"/><rect x="107.5" y="89" width="5.5" height="1"/><rect x="115.5" y="87" width="5.5" height="1"/><rect x="115.5" y="89" width="5.5" height="1"/><rect x="123.5" y="87" width="5.5" height="1"/><rect x="123.5" y="89" width="5.5" height="1"/><rect x="131.5" y="87" width="5.5" height="1"/><rect x="131.5" y="89" width="5.5" height="1"/><rect x="139.5" y="87" width="5.5" height="1"/><rect x="139.5" y="89" width="5.5" height="1"/><rect x="147.5" y="87" width="5.5" height="1"/><rect x="147.5" y="89" width="5.5" height="1"/><rect x="155.5" y="87" width="5.5" height="1"/><rect x="155.5" y="89" width="5.5" height="1"/><rect x="163.5" y="87" width="5.5" height="1"/><rect x="163.5" y="89" width="5.5" height="1"/><rect x="171.5" y="87" width="5.5" height="1"/><rect x="171.5" y="89" width="5.5" height="1"/><rect x="179.5" y="87" width="5.5" height="1"/><rect x="179.5" y="89" width="5.5" height="1"/><rect x="187.5" y="87" width="5.5" height="1"/><rect x="187.5" y="89" width="5.5" height="1"/><rect x="195.5" y="87" width="5.5" height="1"/><rect x="195.5" y="89" width="5.5" height="1"/><rect x="203.5" y="87" width="5.5" height="1"/><rect x="203.5" y="89" width="5.5" height="1"/><rect x="211.5" y="87" width="5.5" height="1"/><rect x="211.5" y="89" width="5.5" height="1"/><rect x="219.5" y="87" width="5.5" height="1"/><rect x="219.5" y="89" width="5.5" height="1"/><rect x="227.5" y="87" width="5.5" height="1"/><rect x="227.5" y="89" width="5.5" height="1"/><rect x="235.5" y="87" width="5.5" height="1"/><rect x="235.5" y="89" width="5.5" height="1"/><rect x="243.5" y="87" width="5.5" height="1"/><rect x="243.5" y="89" width="5.5" height="1"/><rect x="251.5" y="87" width="5.5" height="1"/><rect x="251.5" y="89" width="5.5" height="1"/><rect x="259.5" y="87" width="5.5" height="1"/><rect x="259.5" y="89" width="5.5" height="1"/><rect x="267.5" y="87" width="5.5" height="1"/><rect x="267.5" y="89" width="5.5" height="1"/><rect x="275.5" y="87" width="5.5" height="1"/><rect x="275.5" y="89" width="5.5" height="1"/><rect x="283.5" y="87" width="5.5" height="1"/><rect x="283.5" y="89" width="5.5" height="1"/><rect x="291.5" y="87" width="5.5" height="1"/><rect x="291.5" y="89" width="5.5" height="1"/><rect x="299.5" y="87" width="5.5" height="1"/><rect x="299.5" y="89" width="5.5" height="1"/><rect x="307.5" y="87" width="5.5" height="1"/><rect x="307.5" y="89" width="5.5" height="1"/><rect x="315.5" y="87" width="5.5" height="1"/><rect x="315.5" y="89" width="5.5" height="1"/><rect x="323.5" y="87" width="5.5" height="1"/><rect x="323.5" y="89" width="5.5" height="1"/><rect x="331.5" y="87" width="5.5" height="1"/><rect x="331.5" y="89" width="5.5" height="1"/><rect x="339.5" y="87" width="5.5" height="1"/><rect x="339.5" y="89" width="5.5" height="1"/><rect x="347.5" y="87" width="5.5" height="1"/><rect x="347.5" y="89" width="5.5" height="1"/><rect x="355.5" y="87" width="5.5" height="1"/><rect x="355.5" y="89" width="5.5" height="1"/><rect x="363.5" y="87" width="5.5" height="1"/><rect x="363.5" y="89" width="5.5" height="1"/><rect x="371.5" y="87" width="5.5" height="1"/><rect x="371.5" y="89" width="5.5" height="1"/><rect x="379.5" y="87" width="5.5" height="1"/><rect x="379.5" y="89" width="5.5" height="1"/><rect x="387.5" y="87" width="5.5" height="1"/><rect x="387.5" y="89" width="5.5" height="1"/><rect x="395.5" y="87" width="5.5" height="1"/><rect x="395.5" y="89" width="5.5" height="1"/><rect x="403.5" y="87" width="5.5" height="1"/><rect x="403.5" y="89" width="5.5" height="1"/><rect x="411.5" y="87" width="5.5" height="1"/><rect x="411.5" y="89" width="5.5" height="1"/><rect x="419.5" y="87" width="5.5" height="1"/><rect x="419.5" y="89" width="5.5" height="1"/><rect x="427.5" y="87" width="5.5" height="1"/><rect x="427.5" y="89" width="5.5" height="1"/><rect x="435.5" y="87" width="5.5" height="1"/><rect x="435.5" y="89" width="5.5" height="1"/><rect x="443.5" y="87" width="5.5" height="1"/><rect x="443.5" y="89" width="5.5" height="1"/><rect x="451.5" y="87" width="5.5" height="1"/><rect x="451.5" y="89" width="5.5" height="1"/><rect x="459.5" y="87" width="5.5" height="1"/><rect x="459.5" y="89" width="5.5" height="1"/><rect x="467.5" y="87" width="5.5" height="1"/><rect x="467.5" y="89" width="5.5" height="1"/></g></svg>
<div style="position:absolute;left:138px;top:97px;width:1px;height:17px;background:#222"></div>
<svg style="position:absolute;left:0;top:0" width="949" height="561"><g stroke="#31363b" stroke-width="1" fill="none"><path d="M42.5 -4V13"/><path d="M42.5 13V30"/><rect x="38.5" y="34.5" width="8" height="8" fill="#fff"/><path d="M42.5 43V47"/><path d="M40.0 38.5H45.0"/><path d="M42.5 47V63"/><rect x="38.5" y="67.5" width="8" height="8" fill="#fff"/><path d="M42.5 76V80"/><path d="M40.0 71.5H45.0"/><path d="M42.5 80V88.5H46.0"/><rect x="38.5" y="101.5" width="8" height="8" fill="#fff"/><path d="M42.5 110V114"/><path d="M40.0 105.5H45.0"/><rect x="38.5" y="118.5" width="8" height="8" fill="#fff"/><path d="M42.5 127V131"/><path d="M40.0 122.5H45.0"/><path d="M42.5 131V147"/><rect x="38.5" y="151.5" width="8" height="8" fill="#fff"/><path d="M42.5 160V164"/><path d="M40.0 155.5H45.0"/><path d="M42.5 164V181"/><path d="M42.5 181V197"/><rect x="38.5" y="201.5" width="8" height="8" fill="#fff"/><path d="M42.5 210V214"/><path d="M40.0 205.5H45.0"/><path d="M42.5 214V231"/><path d="M42.5 231V239.5H46.0"/><path d="M42.5 248V264"/><rect x="38.5" y="268.5" width="8" height="8" fill="#fff"/><path d="M42.5 277V281"/><path d="M40.0 272.5H45.0"/><rect x="38.5" y="285.5" width="8" height="8" fill="#fff"/><path d="M42.5 294V298"/><path d="M40.0 289.5H45.0"/><path d="M42.5 298V315"/><path d="M42.5 315V332"/><path d="M42.5 332V349"/><path d="M42.5 349V366"/><path d="M42.5 366V383"/><path d="M42.5 383V400"/><path d="M42.5 400V417"/><path d="M42.5 417V425.5H46.0"/><path d="M42.5 434V442.5H46.0"/><path d="M42.5 451V459.5H46.0"/><path d="M42.5 468V485"/><path d="M42.5 485V493.5H46.0"/><path d="M42.5 502V510.5H46.0"/><path d="M42.5 519V535"/><rect x="38.5" y="539.5" width="8" height="8" fill="#fff"/><path d="M42.5 548V552"/><path d="M40.0 543.5H45.0"/><path d="M42.5 552V560.5H46.0"/></g></svg>
<svg style="position:absolute;left:0;top:0" width="949" height="561"><g stroke="#c4c4c4" stroke-width="1" stroke-dasharray="5 5" fill="none"><path d="M0 2.5H946.5"/><path d="M946.5 2.5V559.5"/><path d="M0 559.5H946.5"/></g></svg><!--/editor--></div>
<div id="bottom">
<div style="position:absolute;left:0;top:0;width:250px;height:2px;background:#fff"></div>
<div style="position:absolute;left:248.5px;top:0;width:0;height:2px;border-left:1px dashed #c4c4c4"></div>
<div style="position:absolute;left:0;top:2px;width:250px;height:1px;background:#cdcdcd"></div>
<div style="position:absolute;left:0;top:2px;width:56px;height:3px;background:#2eb398"></div>
<div style="position:absolute;left:251px;top:0;width:949px;height:1px;background:#d2d2d2"></div>
<div style="position:absolute;left:251px;top:0px;width:115px;height:3px;background:#2eb398"></div>
<svg class="ic" style="left:16px;top:9px" width="25" height="19" viewBox="0 0 25 19"><defs><linearGradient id="fg" x1="0" y1="0" x2="0" y2="1"><stop offset="0" stop-color="#d4d4c4"/><stop offset="1" stop-color="#a6a892"/></linearGradient></defs><path d="M2 1.5Q2 0.5 3 0.5H9L10.5 2H21Q22 2 22 3V6H2Z" fill="#8d8f7a" stroke="#3c3e32" stroke-width="1"/><rect x="4" y="3.5" width="14" height="3" fill="#fff"/><path d="M0.5 6.5Q0.5 5.5 1.5 5.5H22.5Q23.5 5.5 23.5 6.5L22.5 16.5Q22.5 17.5 21.5 17.5H2.5Q1.5 17.5 1.5 16.5Z" fill="url(#fg)" stroke="#3c3e32" stroke-width="1"/></svg>
<svg class="ic" style="left:71px;top:5px" width="26" height="26" viewBox="0 0 26 26"><path d="M10 1.5H24.5Q25 1.5 24.5 2.5L16 16.5H2Z" fill="#3c5f8a" stroke="#1a2a40" stroke-width="1"/><path d="M24.5 2.5L25 5L17 19L16 16.5Z" fill="#e8ecf0" stroke="#1a2a40" stroke-width="0.8"/><path d="M2 16.5H16L17 19H3Q1.5 19 2 16.5Z" fill="#f4f4f4" stroke="#1a2a40" stroke-width="0.8"/><path d="M12 3H22" stroke="#7d9cc0" stroke-width="1"/><path d="M5 16.5H9V25L7 23L5 25Z" fill="#d84a28"/></svg>
<svg class="ic" style="left:125px;top:6px" width="28" height="25" viewBox="0 0 28 25"><path d="M7.5 1.5H20.5L26.5 7.5V23Q26.5 24 25.5 24H8.5Q7.5 24 7.5 23Z" fill="#fff" stroke="#111" stroke-width="1.4"/><path d="M20.5 1.5V7.5H26.5" fill="#e4e4e4" stroke="#111" stroke-width="1"/><rect x="2.5" y="5.5" width="11" height="4" fill="#a9b8c8" stroke="#8898a8" stroke-width="0.8"/><rect x="11.5" y="13.5" width="11" height="4" fill="#a9b8c8" stroke="#8898a8" stroke-width="0.8"/><path d="M8.5 8L14.5 13" stroke="#ee1111" stroke-width="1.5"/><path d="M16.5 14.5L12 14L15.5 10.5Z" fill="#ee1111"/></svg>
<div class="a" style="left:267px;top:9px;color:#31363b">index.html</div>
<svg class="ic" style="left:336px;top:12px" width="10" height="10" viewBox="0 0 10 10"><path d="M1.8 1.8L8.2 8.2M8.2 1.8L1.8 8.2" stroke="#3a3e42" stroke-width="1.9"/></svg>
<div class="a" style="left:660.5px;top:48px;color:#31363b;letter-spacing:-0.22px">Стр.: 39, Стлб.: 12, Симв.: 1277</div>
<div class="a" style="left:891px;top:48px;color:#31363b;letter-spacing:-0.5px">ВСТ</div>
<div class="a" style="left:952px;top:48px;color:#31363b">HTML5, utf-8</div>
</div>
<div style="position:absolute;left:252px;top:191px;width:1px;height:597px;background:#b9b9b9"></div>
</body></html>
